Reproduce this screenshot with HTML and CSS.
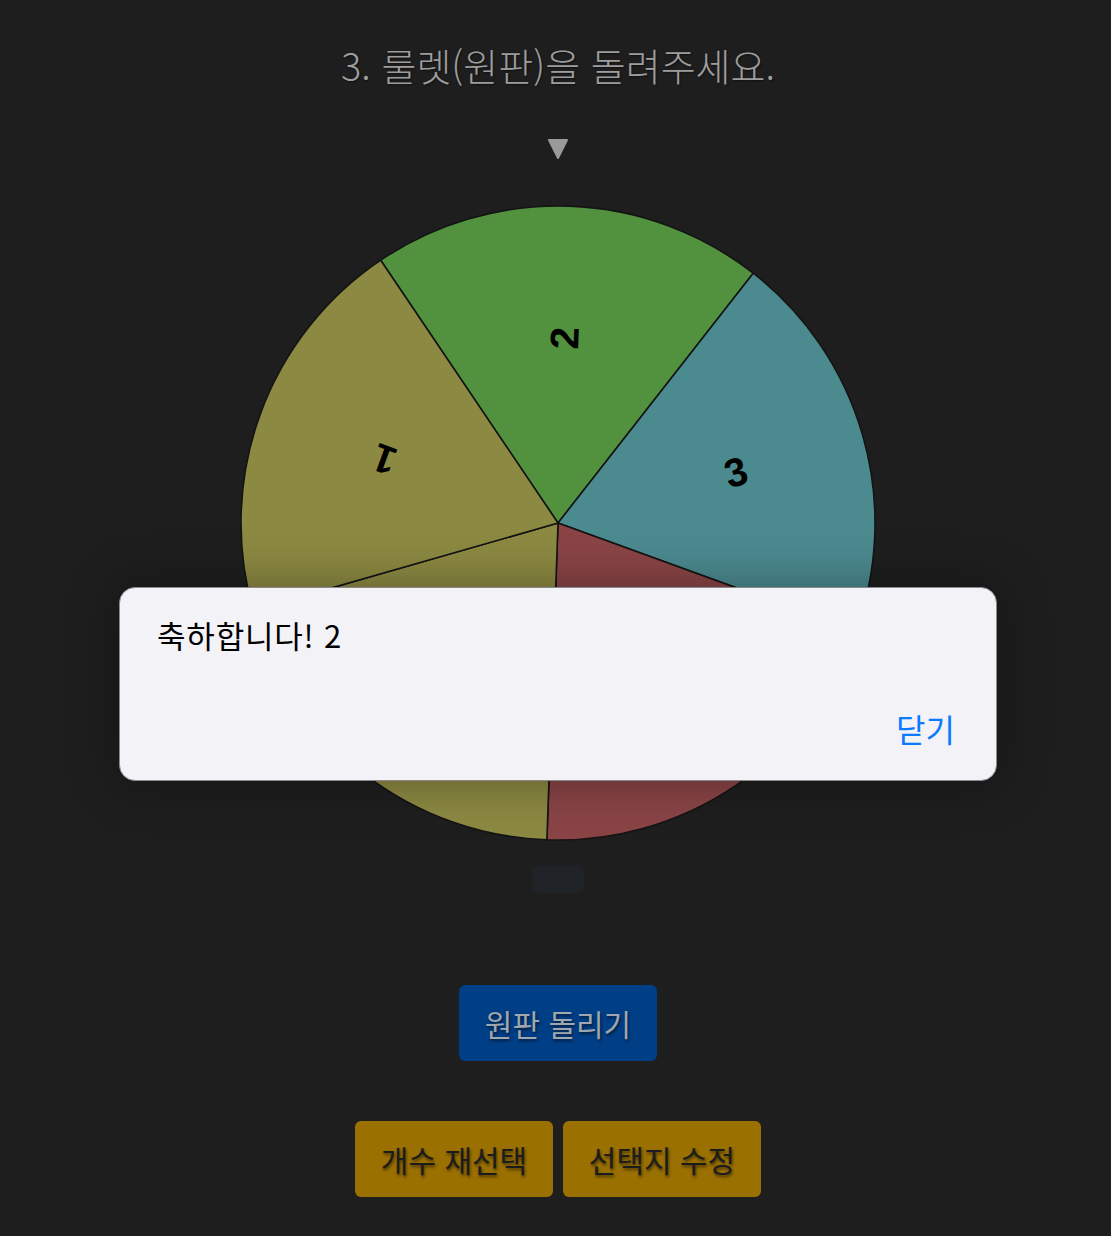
FILE: index.html
```html
<!DOCTYPE html>
<html lang="ko">
<head>
<meta charset="utf-8">
<title>룰렛</title>
<link rel="stylesheet" href="styles.css">
</head>
<body>
<main class="page">
  <h1 class="title">3. 룰렛(원판)을 돌려주세요.</h1>
  <svg class="pointer" width="22" height="22" viewBox="0 0 22 22" aria-hidden="true">
    <polygon points="2,2 20,2 11,20" fill="#9a9a9a" stroke="#9a9a9a" stroke-width="2" stroke-linejoin="round"/>
  </svg>
  <svg class="wheel" width="640" height="640" viewBox="0 0 640 640">
    <g stroke="#141414" stroke-width="1.6" stroke-linejoin="round">
      <path d="M320,320 L142.7,57.2 A317,317 0 0,1 515.2,70.2 Z" fill="#52923f"/>
      <path d="M320,320 L515.2,70.2 A317,317 0 0,1 617.9,428.4 Z" fill="#4b8a8f"/>
      <path d="M320,320 L617.9,428.4 A317,317 0 0,1 308.9,636.8 Z" fill="#8a4446"/>
      <path d="M320,320 L308.9,636.8 A317,317 0 0,1 15.3,407.4 Z" fill="#8c8942"/>
      <path d="M320,320 L15.3,407.4 A317,317 0 0,1 142.7,57.2 Z" fill="#8c8942"/>
    </g>
    <g class="labels">
      <text transform="translate(146.2,256.7) rotate(200)">1</text>
      <text transform="translate(326.5,135.1) rotate(-88)">2</text>
      <text transform="translate(497.8,269) rotate(-16)">3</text>
      <text transform="translate(423.4,473.4) rotate(56)">4</text>
      <text transform="translate(206,465.8) rotate(128)">5</text>
    </g>
  </svg>
  <div class="result"></div>
  <button class="btn btn-spin">원판 돌리기</button>
  <div class="btn-row">
    <button class="btn btn-warn">개수 재선택</button>
    <button class="btn btn-warn">선택지 수정</button>
  </div>
</main>
<div class="dialog" role="alertdialog">
  <p class="dialog-msg">축하합니다! 2</p>
  <div class="dialog-actions">
    <button class="dialog-close">닫기</button>
  </div>
</div>
</body>
</html>
```

FILE: styles.css
```css
* { box-sizing: border-box; }
html, body {
  margin: 0;
  padding: 0;
  background: #1e1e1e;
}
body {
  font-family: "Noto Sans CJK KR", "Noto Sans", sans-serif;
  width: 1111px;
  height: 1236px;
  overflow: hidden;
  position: relative;
}
.page {
  display: flex;
  flex-direction: column;
  align-items: center;
  padding-left: 5px;
  padding-top: 40px;
}
.title {
  margin: 0;
  font-size: 38px;
  line-height: 50px;
  font-weight: 300;
  color: #9d9d9d;
  text-shadow: 1px 1px 2px rgba(0,0,0,0.5);
}
.pointer {
  margin-top: 48px;
  display: block;
}
.wheel {
  display: block;
  margin-top: 43px;
}
.labels text {
  font-family: "Liberation Sans", Arial, sans-serif;
  font-weight: bold;
  font-size: 40px;
  fill: #000;
  text-anchor: middle;
  dominant-baseline: central;
}
.result {
  margin-top: 22px;
  width: 52px;
  height: 28px;
  border-radius: 6px;
  background: #1f2226;
}
.btn {
  font-family: "Noto Sans CJK KR", sans-serif;
  font-size: 30px;
  width: 198px;
  height: 76px;
  border: none;
  border-radius: 6px;
  padding: 0;
  text-shadow: 1px 2px 3px rgba(0,0,0,0.55);
}
.btn-spin {
  margin-top: 92px;
  background: #003e86;
  color: #a0a7ae;
}
.btn-row {
  margin-top: 60px;
  display: flex;
  gap: 10px;
}
.btn-warn {
  background: #9a7000;
  color: #1c1c1c;
}
.dialog {
  position: absolute;
  left: 119px;
  top: 587px;
  width: 878px;
  height: 194px;
  background: #f2f2f7;
  border-radius: 16px;
  border: 1px solid #8a8a8e;
  box-shadow: 0 0 50px rgba(0,0,0,0.35);
  padding: 28px 41px 33px 37px;
  display: flex;
  flex-direction: column;
  justify-content: space-between;
}
.dialog-msg {
  margin: 0;
  font-size: 31px;
  line-height: 38px;
  letter-spacing: 0.8px;
  color: #000;
}
.dialog-actions {
  display: flex;
  justify-content: flex-end;
}
.dialog-close {
  background: none;
  border: none;
  padding: 0;
  font-family: "Noto Sans CJK KR", sans-serif;
  font-size: 32px;
  line-height: 38px;
  color: #0a7aff;
}
```
